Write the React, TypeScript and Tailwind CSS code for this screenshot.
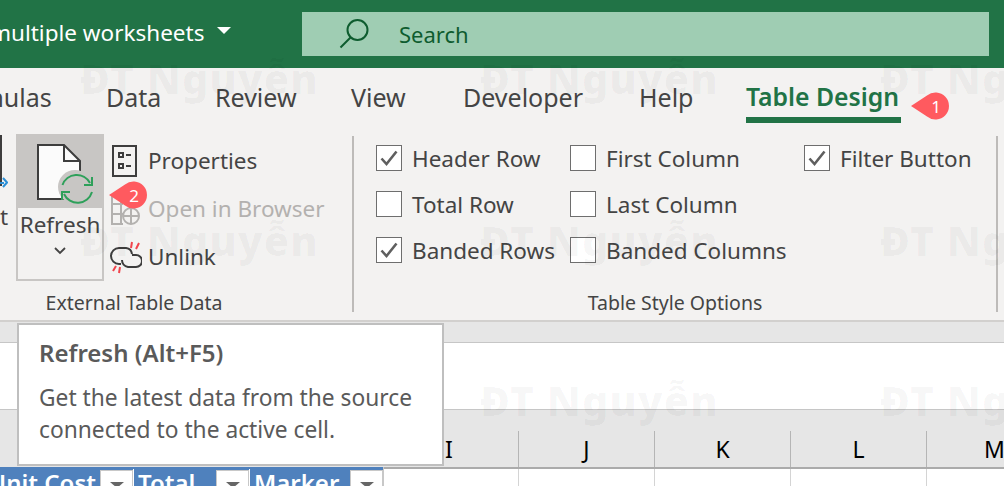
const font = { fontFamily: '"Noto Sans", sans-serif' };

const tabs = [
  { label: "Data", width: "w-[54px]", gap: "mr-[55px]" },
  { label: "Review", width: "w-[81px]", gap: "mr-[55px]" },
  { label: "View", width: "w-[57px]", gap: "mr-[55px]" },
  { label: "Developer", width: "w-[121px]", gap: "mr-[55px]" },
  { label: "Help", width: "w-[54px]", gap: "mr-[53px]" },
];

const Check = ({ checked, label }: { checked?: boolean; label: string }) => (
  <div className="flex h-[46px] items-center gap-[10px] whitespace-nowrap">
    <div className="flex h-[26px] w-[26px] items-center justify-center border border-[#6e6e6e] bg-white">
      {checked && (
        <svg width="20" height="20" viewBox="0 0 20 20" fill="none">
          <path d="M2.5 10.5 L7.5 16 L17.5 3.5" stroke="#5f5f5f" strokeWidth="2.6" />
        </svg>
      )}
    </div>
    <span className="mt-[1px]">{label}</span>
  </div>
);

const Pin = ({ n, className }: { n: number; className: string }) => (
  <div className={`absolute ${className}`}>
    <svg width="40" height="28" viewBox="0 0 40 28">
      <path d="M0 14 L16 3.5 A13.5 13.5 0 1 1 16 24.5 Z" fill="#ff5a5f" />
      <text x="25" y="20.5" fontSize="17" textAnchor="middle" fill="#fff" fontFamily="Noto Sans">{n}</text>
    </svg>
  </div>
);

const marks = [
  [80, 50], [480, 50], [880, 50],
  [80, 212], [480, 212], [880, 212],
  [80, 372], [480, 372], [880, 372],
];

const cols = ["J", "K", "L", "M"];

const FilterBtn = () => (
  <div className="mt-[1px] flex h-[22px] w-[33px] shrink-0 items-end justify-center border border-[#c8c8c8] bg-white pb-[3px]">
    <div className="h-0 w-0 border-x-[7px] border-t-[6px] border-x-transparent border-t-[#666]" />
  </div>
);

export default function App() {
  return (
    <div style={font} className="relative h-[486px] w-[1004px] overflow-hidden bg-white text-[#444]">
      {/* title bar */}
      <div className="flex h-[68px] bg-[#217346] pt-[12px]">
        <div className="flex h-[42px] w-[302px] shrink-0 items-center text-[22.5px] text-white">
          <span className="ml-[-10px] whitespace-nowrap">multiple worksheets</span>
          <div className="mb-[5px] ml-[13px] h-0 w-0 border-x-[7px] border-t-[7px] border-x-transparent border-t-white" />
        </div>
        <div className="flex h-[44px] w-[687px] items-center bg-[#9fcdb3] text-[22px] text-[#0e5c2f]">
          <svg className="ml-[37px]" width="30" height="32" viewBox="0 0 30 32" fill="none" stroke="#0e5c2f" strokeWidth="2">
            <circle cx="18.5" cy="12" r="10" />
            <path d="M11.5 19.5 L1.5 29.5" />
          </svg>
          <span className="ml-[30px]">Search</span>
        </div>
      </div>

      {/* tabs */}
      <div className="flex h-[57px] items-start bg-[#f3f2f1] pt-[12px] text-[25px] leading-[34px] text-[#444]">
        <div className="w-[106px] shrink-0 overflow-hidden">
          <span className="ml-[-58px] block whitespace-nowrap">Formulas</span>
        </div>
        {tabs.map((t) => (
          <div key={t.label} className={`${t.width} ${t.gap} shrink-0 whitespace-nowrap`}>{t.label}</div>
        ))}
        <div className="flex shrink-0 flex-col">
          <span className="text-[24.75px] whitespace-nowrap font-semibold text-[#217346]">Table Design</span>
          <div className="mt-[3px] h-[6px] w-[155px] bg-[#217346]" />
        </div>
      </div>

      {/* ribbon */}
      <div className="flex h-[197px] border-b-[2px] border-[#d2d0ce] bg-[#f3f2f1] text-[22.5px]">
        <div className="flex w-[352px] shrink-0 flex-col">
          <div className="flex h-[157px] pt-[9px]">
            <div className="flex w-[16px] shrink-0 flex-col overflow-hidden">
              <svg width="8" height="60" viewBox="0 0 8 60" fill="none">
                <path d="M1 1 V52" stroke="#3d3d3d" strokeWidth="2" />
                <path d="M0 49 H4 M3 44 L7 48.5 L3 53" stroke="#2b8fd6" strokeWidth="2" />
              </svg>
              <span className="mt-[6px] leading-[34px]">t</span>
            </div>
            <div className="flex h-[147px] w-[88px] shrink-0 flex-col border-[2px] border-[#c8c6c4]">
              <div className="h-[72px] bg-[#c8c6c4] pt-[6px] pl-[13px]">
                <svg width="64" height="66" viewBox="0 0 64 66" fill="none">
                  <path d="M7 3 H33 L49 19 V57 H7 Z" fill="#fbfbfb" stroke="#3d3d3d" strokeWidth="2" />
                  <path d="M33 3 V19 H49" stroke="#3d3d3d" strokeWidth="2" />
                  <circle cx="44" cy="45" r="17" fill="#c8c6c4" />
                  <path d="M31.5 43 A15 15 0 0 1 59 41 M61 50 A15 15 0 0 1 33 52" stroke="#2ea05a" strokeWidth="2" />
                  <path d="M53 43 H61 V35 M39 50 H31 V58" stroke="#2ea05a" strokeWidth="2" />
                </svg>
              </div>
              <div className="text-center leading-[34px] text-[#444]">Refresh</div>
              <div className="mt-[4px] flex justify-center">
                <svg width="14" height="10" viewBox="0 0 14 10" fill="none">
                  <path d="M2 2 L7 7 L12 2" stroke="#444" strokeWidth="1.8" />
                </svg>
              </div>
            </div>
            <div className="ml-[6px] flex flex-col pt-[3px]">
              <div className="flex h-[48px] items-center gap-[8px] whitespace-nowrap">
                <svg width="30" height="34" viewBox="0 0 30 34" fill="none" stroke="#3d3d3d" strokeWidth="2">
                  <rect x="3" y="2" width="23" height="30" />
                  <rect x="9" y="9" width="4" height="4" />
                  <rect x="9" y="20" width="4" height="4" />
                  <path d="M16 11 H21 M16 22 H21" />
                </svg>
                <span>Properties</span>
              </div>
              <div className="flex h-[48px] items-center gap-[8px] whitespace-nowrap text-[#b3b1af]">
                <svg width="30" height="34" viewBox="0 0 30 34" fill="none" stroke="#b3b1af" strokeWidth="2">
                  <path d="M2 2 H16 M2 2 V32 H13 M2 12 H13 M2 22 H13 M11 2 V32" />
                  <circle cx="21" cy="24" r="8" />
                  <path d="M13 24 H29 M21 16 V32" />
                </svg>
                <span>Open in Browser</span>
              </div>
              <div className="flex h-[48px] items-center gap-[6px] whitespace-nowrap">
                <svg width="32" height="34" viewBox="0 0 32 34" fill="none">
                  <path d="M11 24 H9 A8 8 0 0 1 9 8 H16 A7 7 0 0 1 22 14" stroke="#3d3d3d" strokeWidth="2" />
                  <path d="M22 15 H26 A6 6 0 0 1 26 27 H18 A7 7 0 0 1 12 20" stroke="#3d3d3d" strokeWidth="2" />
                  <path d="M22 2 L21 8 M29 3 L26 9 M6 26 L3 31 M10 27 L9 33" stroke="#f1444c" strokeWidth="2" />
                </svg>
                <span>Unlink</span>
              </div>
            </div>
          </div>
          <div className="mt-[7px] flex pl-[16px] text-[19.5px] leading-[28px]">
            <span className="w-[236px] text-center whitespace-nowrap">External Table Data</span>
          </div>
        </div>
        <div className="mt-[11px] h-[176px] w-[2px] shrink-0 bg-[#bdbbb9]" />
        <div className="flex w-[642px] shrink-0 flex-col pt-[10px] pl-[22px]">
          <div className="flex h-[138px]">
            <div className="w-[194px] shrink-0">
              <Check checked label="Header Row" />
              <Check label="Total Row" />
              <Check checked label="Banded Rows" />
            </div>
            <div className="w-[234px] shrink-0">
              <Check label="First Column" />
              <Check label="Last Column" />
              <Check label="Banded Columns" />
            </div>
            <div>
              <Check checked label="Filter Button" />
            </div>
          </div>
          <div className="mt-[16px] w-[598px] text-center text-[19.5px] leading-[28px]">Table Style Options</div>
        </div>
        <div className="mt-[11px] h-[176px] w-[2px] shrink-0 bg-[#bdbbb9]" />
      </div>

      {/* formula bar */}
      <div className="h-[21px] border-b border-[#c6c6c6] bg-[#e6e6e6]" />
      <div className="h-[67px] border-b border-[#c6c6c6] bg-white" />

      {/* column headers */}
      <div className="flex h-[59px] items-start border-b-2 border-[#ababab] bg-[#e6e6e6] pt-[21px] text-[23px] leading-[36px] text-black">
        <div className="w-[445px] shrink-0" />
        <div className="h-[36px] w-[73px] shrink-0">I</div>
        {cols.map((c) => (
          <div key={c} className="h-[36px] w-[136px] shrink-0 border-l border-[#b5b5b5] text-center">{c}</div>
        ))}
      </div>

      {/* grid */}
      <div className="relative -mt-[2px] flex h-[19px]">
        <div className="flex w-[384px] shrink-0 border-r border-[#c8c8c8] bg-[#4f81bd] pt-[2px] text-[24px] leading-[28px] font-semibold text-white">
          <div className="flex w-[134px] shrink-0 justify-end border-r border-white">
            <span className="mr-[4px] whitespace-nowrap">Unit Cost</span>
            <FilterBtn />
          </div>
          <div className="flex w-[116px] shrink-0 justify-between border-r border-white pl-[4px]">
            <span>Total</span>
            <FilterBtn />
          </div>
          <div className="flex w-[133px] shrink-0 justify-between pl-[4px]">
            <span>Marker</span>
            <FilterBtn />
          </div>
        </div>
        <div className="w-[134px] shrink-0" />
        {cols.map((c) => (
          <div key={c} className="mt-[2px] w-[136px] shrink-0 border-l border-[#d4d4d4]" />
        ))}
      </div>

      {/* watermark */}
      {marks.map(([x, y], i) => (
        <div
          key={i}
          style={{ left: x, top: y }}
          className="pointer-events-none absolute text-[41px] leading-[56px] font-black tracking-[1px] whitespace-nowrap text-black/[0.03]"
        >
          ĐT Nguyễn
        </div>
      ))}

      {/* tooltip */}
      <div className="absolute top-[323px] left-[17px] h-[143px] w-[427px] border-2 border-[#bfbfbf] bg-white pt-[12px] pl-[20px] text-[#5a5a5a]">
        <div className="text-[24px] leading-[32px] font-semibold">Refresh (Alt+F5)</div>
        <div className="mt-[13px] text-[22.75px] leading-[32px]">
          <div className="whitespace-nowrap">Get the latest data from the source</div>
          <div className="whitespace-nowrap">connected to the active cell.</div>
        </div>
      </div>

      <Pin n={1} className="top-[92px] left-[911px]" />
      <Pin n={2} className="top-[181px] left-[109px]" />
    </div>
  );
}
